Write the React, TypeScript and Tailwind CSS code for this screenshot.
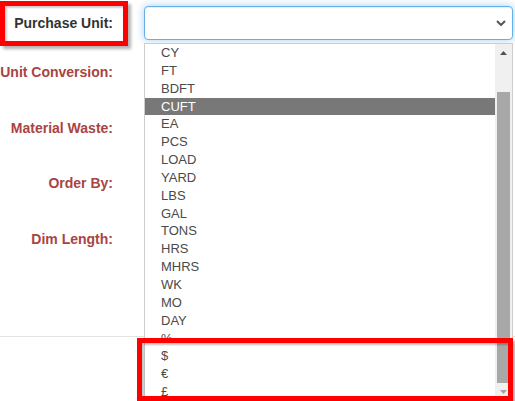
import React from "react"

const units = [
  "CY", "FT", "BDFT", "CUFT", "EA", "PCS", "LOAD", "YARD", "LBS", "GAL",
  "TONS", "HRS", "MHRS", "WK", "MO", "DAY", "%", "$", "€", "£",
]

const labels = [
  { text: "Unit Conversion:", h: "h-[56px]" },
  { text: "Material Waste:", h: "h-[55px]" },
  { text: "Order By:", h: "h-[56px]" },
  { text: "Dim Length:", h: "h-[56px]" },
]

export default function App() {
  return (
    <div className="relative w-[515px] h-[401px] overflow-hidden bg-white font-['Liberation_Sans',Arial,sans-serif]">
      {/* form rows */}
      <div className="flex h-[46px] items-center">
        <label className="w-[128px] shrink-0 pr-[15px] text-right text-[14px] font-bold leading-4 text-[#333]">
          Purchase Unit:
        </label>
        <div className="ml-[16px] flex h-[34px] w-[369px] items-center justify-end rounded-[4px] border border-[#66afe9] bg-white pr-[6px] shadow-[inset_0_1px_1px_rgba(0,0,0,0.075),0_0_8px_rgba(102,175,233,0.6)]">
          <svg width="10" height="6" viewBox="0 0 10 6">
            <polyline points="1,1 5,5 9,1" fill="none" stroke="#555" strokeWidth="2" />
          </svg>
        </div>
      </div>
      <div className="pt-[18px]">
        {labels.map((l) => (
          <div key={l.text} className={`${l.h} flex`}>
            <label className="w-[128px] shrink-0 pr-[15px] text-right text-[14px] font-bold leading-4 text-[#a94442] whitespace-nowrap">
              {l.text}
            </label>
          </div>
        ))}
      </div>
      <div className="mt-[49px] border-t border-[#e3e3e3]" />

      {/* open dropdown list */}
      <div className="absolute left-[144px] top-[43px] flex h-[380px] w-[369px] border border-[#cdcdcd] bg-white">
        <ul className="flex-1">
          {units.map((u) => (
            <li
              key={u}
              className={`h-[17.85px] pl-[16px] text-[13px] leading-[17.85px] ${
                u === "CUFT" ? "bg-[#787878] text-white" : "text-[#4a4a4a]"
              }`}
            >
              {u}
            </li>
          ))}
        </ul>
        <div className="flex w-[17px] flex-col bg-[#f0f0f0]">
          <div className="flex h-[17px] items-center justify-center">
            <svg width="7" height="4" viewBox="0 0 7 4">
              <polygon points="0,4 3.5,0 7,4" fill="#505050" />
            </svg>
          </div>
          <div className="mx-[2px] mt-[31px] h-[291px] bg-[#a8a8a8]" />
          <div className="flex h-[17px] items-center justify-center">
            <svg width="7" height="4" viewBox="0 0 7 4">
              <polygon points="0,0 7,0 3.5,4" fill="#a3a3a3" />
            </svg>
          </div>
        </div>
      </div>

      {/* annotation frames */}
      <div className="absolute left-0 top-[1px] h-[45px] w-[128px] border-[5px] border-[#f00] shadow-[3px_3px_3px_rgba(0,0,0,0.3),inset_2px_2px_2px_rgba(0,0,0,0.2)]" />
      <div className="absolute left-[137px] top-[338px] h-[63px] w-[376px] border-[5px] border-[#f00] shadow-[3px_3px_3px_rgba(0,0,0,0.3),inset_2px_2px_2px_rgba(0,0,0,0.25)]" />
    </div>
  )
}
